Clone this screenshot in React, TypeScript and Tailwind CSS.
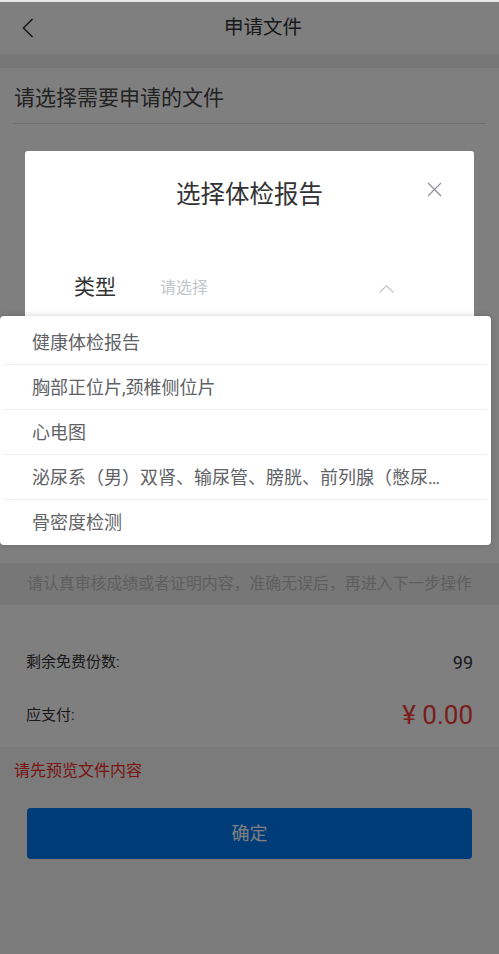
import React from 'react';

const options = [
  '健康体检报告',
  '胸部正位片,颈椎侧位片',
  '心电图',
  '泌尿系（男）双肾、输尿管、膀胱、前列腺（憋尿）、残余尿测定',
  '骨密度检测',
];

const BackIcon = () => (
  <svg width="12" height="20" viewBox="0 0 12 20" fill="none">
    <path d="M10.5 1 L1.5 10 L10.5 19" stroke="#333" strokeWidth="1.6" />
  </svg>
);

const CloseIcon = () => (
  <svg width="15" height="15" viewBox="0 0 15 15" fill="none">
    <path d="M1 1 L14 14 M14 1 L1 14" stroke="#909399" strokeWidth="1.3" />
  </svg>
);

const ChevronUp = () => (
  <svg width="15" height="8" viewBox="0 0 15 8" fill="none">
    <path d="M0.5 7.5 L7.5 0.8 L14.5 7.5" stroke="#c0c4cc" strokeWidth="1.1" />
  </svg>
);

const SelectReportModal: React.FC = () => (
  <>
    <div className="absolute left-[25px] top-[149px] w-[449px] h-[260px] bg-white rounded-[3px]">
      <div className="relative pt-[28px] text-center text-[24.5px] leading-[32px] text-[#333]">
        选择体检报告
        <button className="absolute left-[402px] top-[31px]">
          <CloseIcon />
        </button>
      </div>
      <div className="flex items-center mt-[62px] h-[30px]">
        <span className="ml-[49px] w-[86px] text-[21px] text-[#333]">类型</span>
        <span className="text-[16px] text-[#c0c4cc]">请选择</span>
        <span className="ml-auto mr-[80px] mt-[2px]">
          <ChevronUp />
        </span>
      </div>
    </div>
    <div className="absolute left-0 top-[314px] w-[491px] bg-white rounded-[4px] pt-[4px] shadow-[0_0_6px_rgba(0,0,0,0.18)]">
      {options.map((o, i) => (
        <div
          key={o}
          className={`mx-[4px] h-[45px] flex items-center pl-[28px] pr-[42px] text-[18px] text-[#606266] ${
            i < options.length - 1 ? 'border-b border-[#ebeef5]' : ''
          }`}
        >
          <span className="truncate">{o}</span>
        </div>
      ))}
    </div>
  </>
);

export default function App() {
  return (
    <div className="w-full min-h-[954px] bg-white font-['Roboto','Noto_Sans_CJK_SC',sans-serif]">
      <div className="h-[2px] bg-[#e8e8e8]" />
      <div className="relative min-h-[952px] flex flex-col">
        <div className="relative h-[52px] flex items-center justify-center">
          <span className="absolute left-[22px] top-[16px]">
            <BackIcon />
          </span>
          <span className="ml-[27px] text-[19.5px] text-[#333]">申请文件</span>
        </div>
        <div className="h-[14px] bg-[#eeeeee]" />
        <div className="pt-[16px] px-[14px] text-[21px] leading-[28px] text-[#444]">请选择需要申请的文件</div>
        <div className="mt-[11px] mx-[13px] h-px bg-[#e0e0e0]" />
        <div className="h-[439px]" />
        <div className="h-[42px] bg-[#eeeeee] flex items-center px-[27px] text-[15.9px] whitespace-nowrap text-[#bdbdbd]">
          请认真审核成绩或者证明内容，准确无误后，再进入下一步操作
        </div>
        <div className="pt-[31px] pb-[5px] px-[26px]">
          <div className="h-[53px] flex items-center justify-between text-[15px] text-[#333]">
            <span>剩余免费份数:</span>
            <span className="text-[18px]">99</span>
          </div>
          <div className="h-[53px] flex items-center justify-between text-[15px] text-[#333]">
            <span>应支付:</span>
            <span className="text-[26px] text-[#f23a3a]">¥ 0.00</span>
          </div>
        </div>
        <div className="flex-1 bg-[#f7f7f7]">
          <div className="pt-[14px] px-[14px] text-[16px] leading-[20px] text-[#f02828]">请先预览文件内容</div>
          <button className="mt-[27px] mx-[27px] w-[445px] h-[51px] rounded-[4px] bg-[#0078f0] text-white text-[18px]">
            确定
          </button>
        </div>
        <div className="absolute inset-0 bg-black/50" />
        <SelectReportModal />
      </div>
    </div>
  );
}
